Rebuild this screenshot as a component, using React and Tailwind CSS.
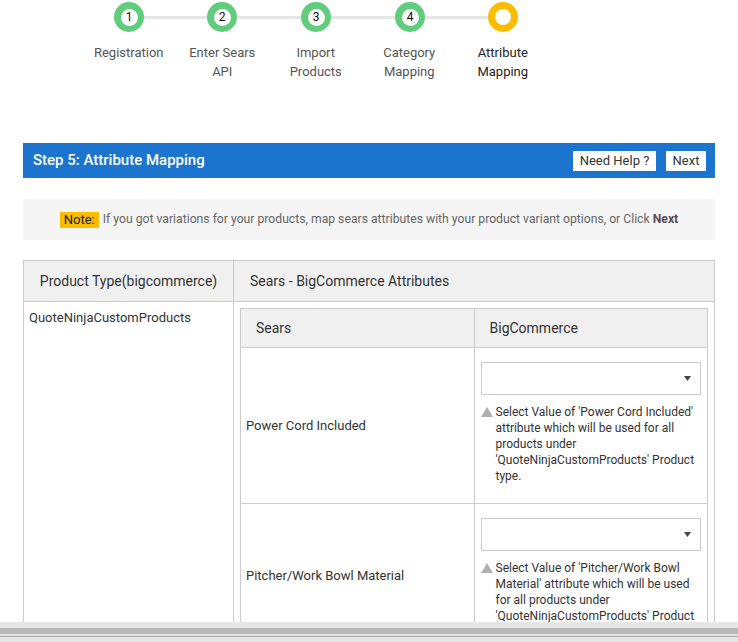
import React from 'react';

const steps = [
  ['Registration'],
  ['Enter Sears', 'API'],
  ['Import', 'Products'],
  ['Category', 'Mapping'],
  ['Attribute', 'Mapping'],
];

const lines = ['w-[63px]', 'w-[64px]', 'w-[64px]', 'w-[63px]'];

function DoneCircle({ n }) {
  return (
    <div className="w-[30px] h-[30px] rounded-full bg-[#5fcd7c] flex items-center justify-center shrink-0">
      <div className="w-[17px] h-[17px] rounded-full bg-white flex items-center justify-center text-[12px] leading-none text-[#111]">
        {n}
      </div>
    </div>
  );
}

function ActiveCircle() {
  return (
    <div className="w-[30px] h-[30px] rounded-full bg-[#fcbd00] flex items-center justify-center shrink-0">
      <div className="w-[16px] h-[16px] rounded-full bg-white" />
    </div>
  );
}

function Stepper() {
  return (
    <div>
      <div className="flex items-center mt-[2px] ml-[91px]">
        {steps.map((s, i) => (
          <React.Fragment key={i}>
            {i < 4 ? <DoneCircle n={i + 1} /> : <ActiveCircle />}
            {i < 4 && <div className={`${lines[i]} h-[3px] bg-[#e5e5e5]`} />}
          </React.Fragment>
        ))}
      </div>
      <div className="flex ml-[59px] mt-[11px]">
        {steps.map((s, i) => (
          <div
            key={i}
            className={`w-[93.5px] shrink-0 text-center text-[13px] leading-[19px] ${i === 4 ? 'text-[#222]' : 'text-[#555]'}`}
          >
            {s.map((l) => (
              <div key={l}>{l}</div>
            ))}
          </div>
        ))}
      </div>
    </div>
  );
}

function Triangle() {
  return (
    <svg width="12" height="10" viewBox="0 0 12 10" className="shrink-0 mt-[3px]">
      <polygon points="6,0 12,10 0,10" fill="#b0b0b0" />
    </svg>
  );
}

function AttrRow({ name, last }) {
  return (
    <tr>
      <td className="border border-[#cccccc] pl-[5px] text-[13px] text-[#333] align-middle">{name}</td>
      <td className={`border border-[#cccccc] px-[6px] pt-[14px] align-top ${last ? 'pb-[8px]' : 'pb-[19px]'}`}>
        <div className="h-[33px] border border-[#cccccc] flex items-center justify-end pr-[9px]">
          <svg width="7" height="5" viewBox="0 0 7 5">
            <polygon points="0,0 7,0 3.5,5" fill="#444" />
          </svg>
        </div>
        <div className="flex gap-[3px] mt-[9px] text-[12px] leading-[16px] text-[#333]">
          <Triangle />
          <div className="w-[210px]">
            Select Value of '{name}' attribute which will be used for all products under 'QuoteNinjaCustomProducts' Product type.
          </div>
        </div>
      </td>
    </tr>
  );
}

export default function App() {
  return (
    <div className="h-[642px] w-[738px] flex flex-col bg-white overflow-hidden font-['Roboto','Liberation_Sans',sans-serif]">
      <div className="flex-1 overflow-hidden px-[23px]">
        <Stepper />

        <div className="mt-[62px] h-[35px] bg-[#1b75cf] flex items-center justify-between pl-[10px] pr-[9px]">
          <div className="text-white text-[15px] font-medium">Step 5: Attribute Mapping</div>
          <div className="flex gap-[10px]">
            <button className="w-[83px] h-[20px] bg-white text-[13px] text-[#333] leading-none">Need Help ?</button>
            <button className="w-[40px] h-[20px] bg-white text-[13px] text-[#333] leading-none">Next</button>
          </div>
        </div>

        <div className="mt-[21px] h-[41px] bg-[#f5f5f5] flex items-center justify-center text-[12.2px] text-[#666]">
          <span className="bg-[#fcbd00] text-[#222] text-[13px] px-[4px] leading-[16px] mr-[4px]">Note:</span>
          <span>
            If you got variations for your products, map sears attributes with your product variant options, or Click{' '}
            <b className="text-[#5a4a5a]">Next</b>
          </span>
        </div>

        <table className="mt-[20px] w-full border-collapse">
          <thead>
            <tr className="h-[41px] bg-[#f0f0f0] text-[14px] text-[#333]">
              <th className="w-[210px] border border-[#cccccc] font-normal text-center">Product Type(bigcommerce)</th>
              <th className="border border-[#cccccc] font-normal text-left pl-[16px]">Sears - BigCommerce Attributes</th>
            </tr>
          </thead>
          <tbody>
            <tr>
              <td className="border border-[#cccccc] align-top px-[5px] pt-[6px] text-[13px] text-[#333]">QuoteNinjaCustomProducts</td>
              <td className="border border-[#cccccc] p-[6px] align-top">
                <table className="w-full border-collapse table-fixed">
                  <thead>
                    <tr className="h-[39px] bg-[#f0f0f0] text-[14px] text-[#333]">
                      <th className="border border-[#cccccc] font-normal text-left pl-[15px]">Sears</th>
                      <th className="border border-[#cccccc] font-normal text-left pl-[15px]">BigCommerce</th>
                    </tr>
                  </thead>
                  <tbody>
                    <AttrRow name="Power Cord Included" />
                    <AttrRow name="Pitcher/Work Bowl Material" last />
                  </tbody>
                </table>
              </td>
            </tr>
          </tbody>
        </table>
      </div>

      <div className="h-[20px] flex flex-col shrink-0">
        <div className="h-[6px] bg-[#e6e6e6]" />
        <div className="h-[6px] bg-[#b9b9b9]" />
        <div className="h-[2px] bg-[#e2e2e2]" />
        <div className="h-[1px] bg-[#acacac]" />
        <div className="flex-1 bg-[#e6e6e6]" />
      </div>
    </div>
  );
}
